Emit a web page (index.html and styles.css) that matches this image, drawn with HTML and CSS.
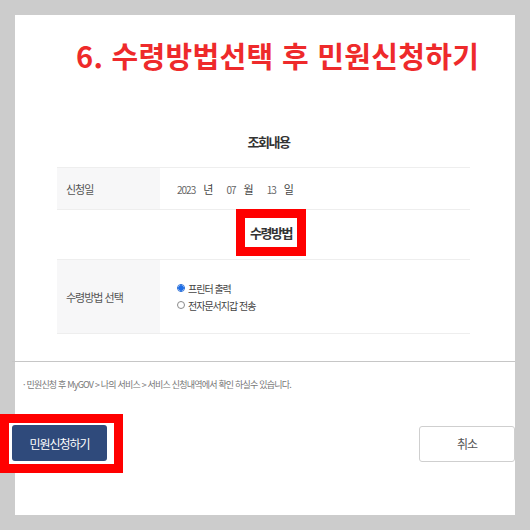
FILE: index.html
```html
<!DOCTYPE html>
<html lang="ko">

<head>
    <meta charset="UTF-8" />
    <meta name="viewport" content="width=device-width, initial-scale=1.0" />
    <title>수령방법선택 후 민원신청하기</title>
    <link rel="stylesheet" href="styles.css">
</head>

<body>
    <div class="sheet">
        <h1 class="guide-title">6. 수령방법선택 후 민원신청하기</h1>

        <div class="capture">
            <h2 class="section-title">조회내용</h2>
            <table class="info-table">
                <tr class="row-date">
                    <th>신청일</th>
                    <td>
                        <span class="num">2023</span><span class="unit">년</span>
                        <span class="num">07</span><span class="unit">월</span>
                        <span class="num">13</span><span class="unit">일</span>
                    </td>
                </tr>
            </table>

            <div class="method-head">
                <span class="mark">
                    <span class="mark-text">수령방법</span>
                </span>
            </div>

            <table class="info-table info-table-flush">
                <tr class="row-method">
                    <th>수령방법 선택</th>
                    <td>
                        <ul class="radio-list">
                            <li class="radio-item"><span class="radio checked"></span>프린터 출력</li>
                            <li class="radio-item"><span class="radio"></span>전자문서지갑 전송</li>
                        </ul>
                    </td>
                </tr>
            </table>

            <hr class="divider">

            <p class="note">· 민원신청 후 MyGOV &gt; 나의 서비스 &gt; 서비스 신청내역에서 확인 하실수 있습니다.</p>

            <div class="actions">
                <span class="mark mark-button">
                    <button class="btn btn-primary">민원신청하기</button>
                </span>
                <button class="btn btn-cancel">취소</button>
            </div>
        </div>
    </div>
</body>

</html>
```

FILE: styles.css
```css
* {
    margin: 0;
    padding: 0;
    box-sizing: border-box;
}

body {
    background: #cccccc;
    padding: 15px;
    font-family: "Noto Sans CJK KR", "Noto Sans", sans-serif;
}

.sheet {
    width: 500px;
    height: 500px;
    background: #ffffff;
    padding-top: 20px;
}

.guide-title {
    font-size: 29px;
    font-weight: 700;
    line-height: 40px;
    letter-spacing: 0.3px;
    color: #ee2a2b;
    padding-left: 61px;
}

.capture {
    width: 503px;
    margin: 57px 0 0 -3px;
}

.section-title {
    font-size: 13px;
    font-weight: 700;
    line-height: 20px;
    letter-spacing: -1.5px;
    color: #333333;
    text-align: center;
    padding-left: 10px;
}

.info-table {
    width: 413px;
    margin: 15px 0 0 45px;
    border-collapse: collapse;
}

.info-table-flush {
    margin-top: 0;
}

.info-table th,
.info-table td {
    border-top: 1px solid #eeeeee;
    border-bottom: 1px solid #eeeeee;
    font-size: 11px;
    color: #555555;
    letter-spacing: -1px;
}

.info-table th {
    width: 103px;
    background: #f7f7f8;
    font-weight: 400;
    text-align: left;
    padding-left: 9px;
}

.info-table td {
    padding-left: 17px;
}

.row-date {
    height: 42px;
}

.row-method {
    height: 74px;
}

.num {
    font-size: 10px;
    color: #666666;
}

.unit {
    margin: 0 12px 0 8px;
    color: #444444;
}

.method-head {
    display: flex;
    justify-content: center;
    height: 49px;
    padding-left: 15px;
}

.mark {
    display: inline-block;
    border: 9px solid #ff0000;
    background: #ffffff;
}

.method-head .mark {
    margin-top: -1px;
    height: 47px;
    padding: 4px 5px;
}

.mark-text {
    display: block;
    font-size: 13px;
    font-weight: 700;
    line-height: 21px;
    letter-spacing: -1.5px;
    color: #333333;
}

.radio-list {
    list-style: none;
}

.radio-item {
    display: flex;
    align-items: center;
    gap: 3px;
    height: 17px;
    font-size: 10px;
    color: #444444;
}

.radio {
    width: 8px;
    height: 8px;
    border-radius: 50%;
    border: 1px solid #8a8a8a;
    background: #ffffff;
}

.radio.checked {
    border-color: #2a6fd6;
    background: radial-gradient(circle, #1e6ee8 0 2.5px, #ffffff 3px);
}

.divider {
    border: none;
    border-top: 1px solid #c6c6c6;
    margin-top: 27px;
}

.note {
    font-size: 9px;
    line-height: 14px;
    letter-spacing: -0.8px;
    color: #777777;
    margin-top: 16px;
    padding-left: 11px;
}

.actions {
    display: flex;
    justify-content: space-between;
    align-items: center;
    margin-top: 22px;
}

.mark-button {
    margin-left: -12px;
    padding: 2px 7px 3px 3px;
}

.btn {
    display: block;
    height: 36px;
    font-family: inherit;
    font-size: 12px;
    letter-spacing: -1px;
    border-radius: 3px;
    cursor: pointer;
}

.btn-primary {
    width: 95px;
    background: #2f4a7b;
    color: #ffffff;
    border: none;
}

.btn-cancel {
    width: 96px;
    background: #ffffff;
    color: #555555;
    border: 1px solid #cfcfcf;
}
```
